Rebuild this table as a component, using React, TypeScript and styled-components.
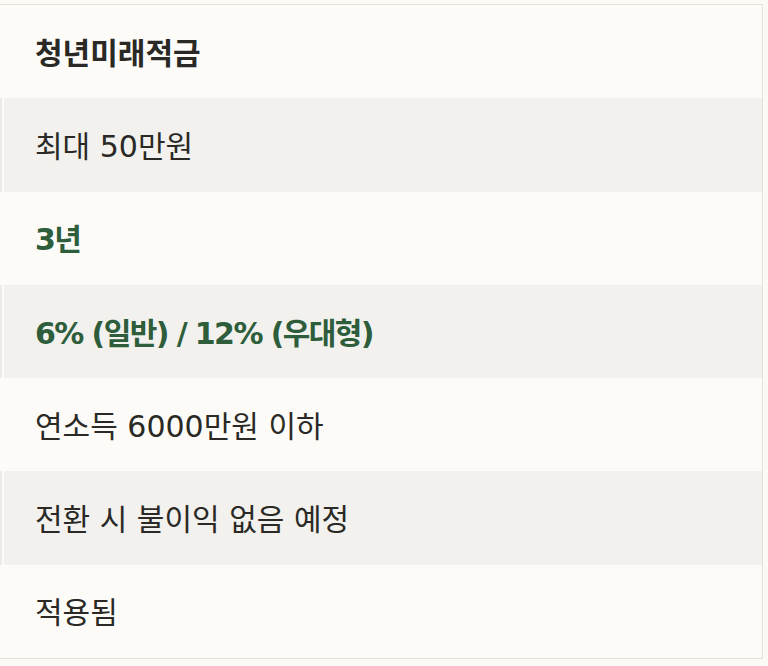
import styled, { createGlobalStyle } from "styled-components";

const GlobalStyle = createGlobalStyle`
  html, body {
    margin: 0;
    background: #fbfaf6;
  }
`;

const rows = [
  { text: "청년미래적금", tone: "head" },
  { text: "최대 50만원", tone: "plain", shaded: true },
  { text: "3년", tone: "accent" },
  { text: "6% (일반) / 12% (우대형)", tone: "accent", shaded: true },
  { text: "연소득 6000만원 이하", tone: "plain" },
  { text: "전환 시 불이익 없음 예정", tone: "plain", shaded: true },
  { text: "적용됨", tone: "plain" },
];

const Table = styled.div`
  margin-top: 4px;
  width: 762px;
  border: 1px solid #e4e2dc;
  border-left: none;
  background: #fcfbf7;
  display: flex;
  flex-direction: column;
`;

const Cell = styled.div<{ $shaded?: boolean; $tone: string }>`
  height: 93.3px;
  display: flex;
  align-items: center;
  padding-left: 35px;
  padding-bottom: 2px;
  box-sizing: border-box;
  background: ${(p) =>
    p.$shaded
      ? "linear-gradient(to right, #ebeae6 0 2px, #fcfbf7 2px 4px, #f2f1ee 4px)"
      : "#fcfbf7"};
  font-family: "DejaVu Sans", "Noto Sans CJK KR", sans-serif;
  font-size: 30px;
  font-weight: ${(p) => (p.$tone === "plain" ? 400 : 700)};
  letter-spacing: ${(p) => (p.$tone === "accent" ? "-1.6px" : "0")};
  color: ${(p) => (p.$tone === "accent" ? "#2e5d3b" : "#2a2925")};
`;

export default function App() {
  return (
    <>
      <GlobalStyle />
      <Table>
        {rows.map((r, i) => (
          <Cell key={i} $shaded={r.shaded} $tone={r.tone}>
            {r.text}
          </Cell>
        ))}
      </Table>
    </>
  );
}
